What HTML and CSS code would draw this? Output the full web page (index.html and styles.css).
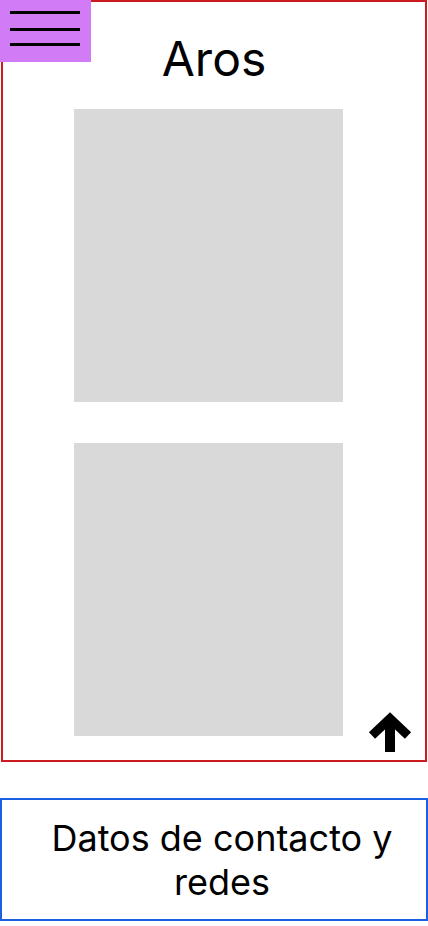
FILE: index.html
```html
<!DOCTYPE html>
<html lang="es">

<head>
    <meta charset="UTF-8">
    <meta name="viewport" content="width=device-width, initial-scale=1.0">
    <title>Aros</title>
    <link rel="stylesheet" href="styles.css">
</head>

<body>
    <!-- menu hamburguesa -->
    <button class="menu" aria-label="Menú">
        <span class="menu-linea"></span>
        <span class="menu-linea"></span>
        <span class="menu-linea"></span>
    </button>

    <main class="marco">
        <h1 class="titulo">Aros</h1>
        <div class="galeria">
            <div class="foto"></div>
            <div class="foto"></div>
        </div>
        <a href="#" class="subir" aria-label="Subir">
            <svg width="40" height="40" viewBox="0 0 40 40">
                <path d="M20 40V5" stroke="#000" stroke-width="10" fill="none" />
                <path d="M2 23.5L20 6.5L38 23.5" stroke="#000" stroke-width="9" fill="none" stroke-linejoin="miter" />
            </svg>
        </a>
    </main>

    <footer class="pie">
        <p class="contacto">Datos de contacto y redes</p>
    </footer>
</body>

</html>
```

FILE: styles.css
```css
/* estilos de la pagina de aros */
body {
    margin: 0;
    font-family: Inter, "Noto Sans", sans-serif;
    background: #fff;
    color: #000;
}

.menu {
    position: absolute;
    top: 0;
    left: 0;
    width: 91px;
    height: 62px;
    padding: 0;
    border: none;
    background: #d17bf6;
    z-index: 2;
}

.menu-linea {
    position: absolute;
    left: 10px;
    width: 70px;
    height: 3px;
    background: #000;
}

.menu-linea:nth-child(1) {
    top: 11px;
}

.menu-linea:nth-child(2) {
    top: 28px;
}

.menu-linea:nth-child(3) {
    top: 43px;
}

.marco {
    position: relative;
    box-sizing: border-box;
    width: 426px;
    height: 762px;
    margin-left: 1px;
    border: 2px solid #cc1b1f;
}

.titulo {
    margin: 0;
    padding-top: 28px;
    font-size: 48px;
    font-weight: 400;
    line-height: 58px;
    text-align: center;
}

.galeria {
    display: flex;
    flex-direction: column;
    gap: 41px;
    padding-top: 21px;
    padding-left: 71px;
}

.foto {
    width: 269px;
    height: 293px;
    background: #d9d9d9;
}

.subir {
    position: absolute;
    right: 15px;
    bottom: 8px;
    width: 40px;
    height: 40px;
}

.subir svg {
    display: block;
    overflow: visible;
}

.pie {
    box-sizing: border-box;
    margin-top: 36px;
    width: 428px;
    height: 123px;
    border: 2px solid #1d5fe3;
    display: flex;
    align-items: center;
    justify-content: center;
    padding-left: 16px;
}

.contacto {
    margin: 0;
    font-size: 36px;
    line-height: 44px;
    text-align: center;
    width: 380px;
}
```
